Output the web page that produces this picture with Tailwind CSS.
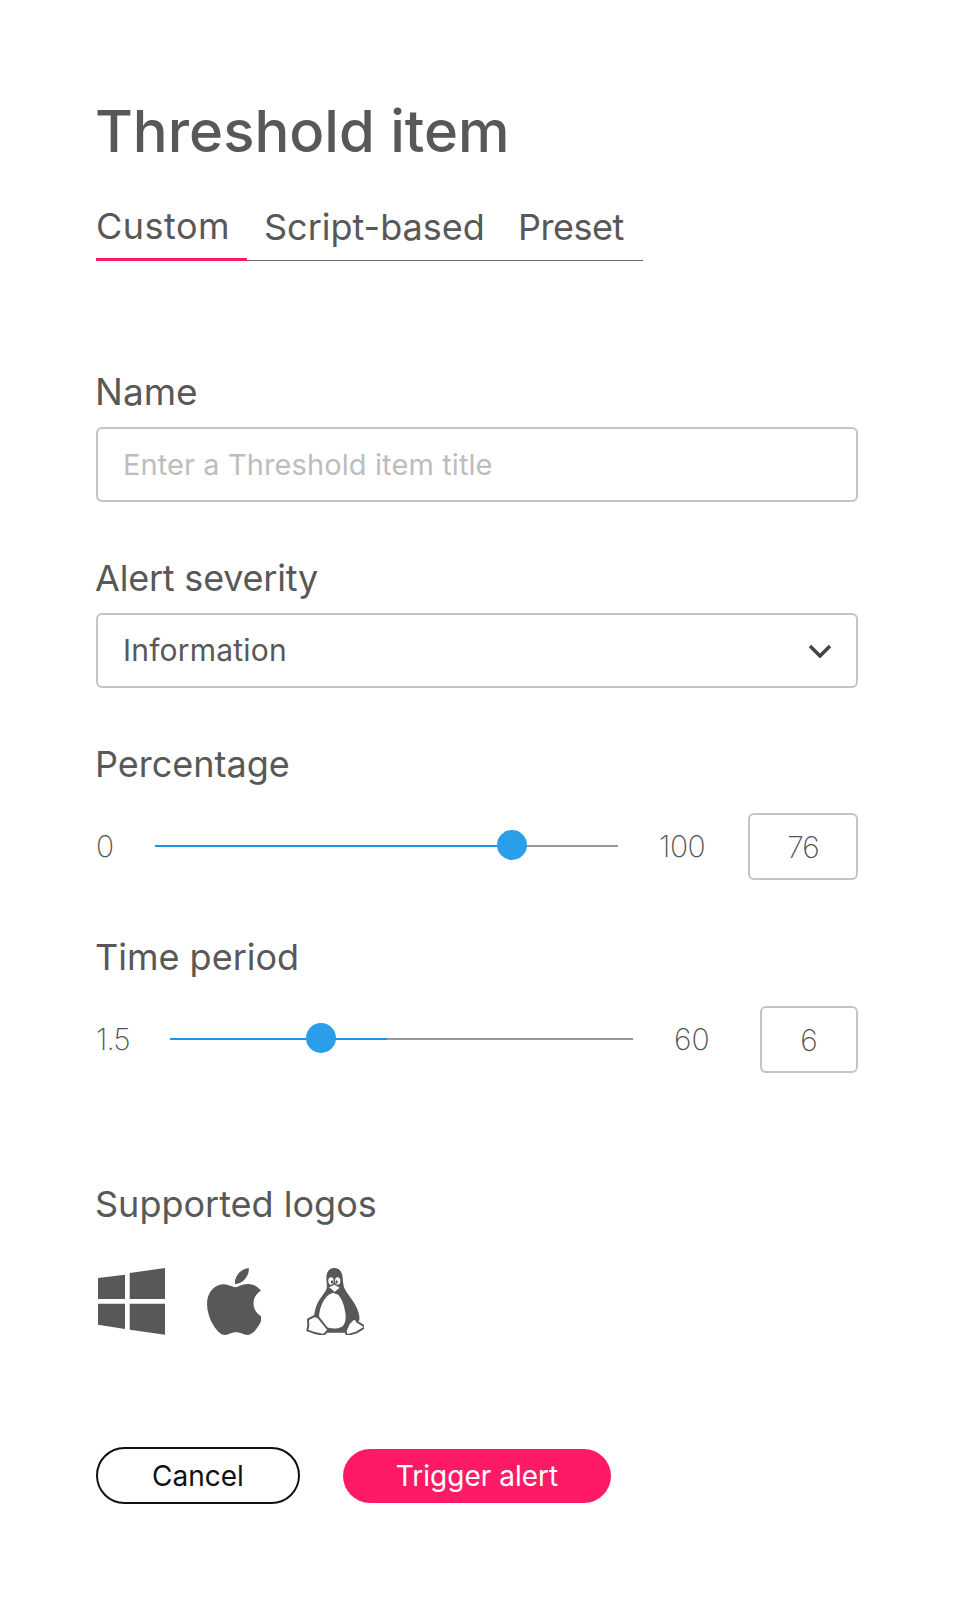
<!DOCTYPE html>
<html lang="en">
<head>
    <meta charset="UTF-8">
    <title>Threshold item</title>
    <script src="https://cdn.jsdelivr.net/npm/@tailwindcss/browser@4"></script>
</head>
<body class="bg-white font-['Inter',sans-serif] text-[#585858]">
    <main class="w-[954px] h-[1600px] pl-[96px] pr-[96px] pt-[96px]">
        <h1 class="-ml-px text-[58px] leading-[70px] font-medium">Threshold item</h1>

        <!-- Tabs -->
        <div class="flex w-[547px] mt-[35px] border-b border-[#666] h-[60px] text-[36px] leading-[44px]">
            <button class="w-[151px] h-[60px] pb-[8px] text-left tracking-[0.5px] border-b-[3px] border-[#ff1a66]">Custom</button>
            <button class="ml-[17px] w-[254px] pb-[8px] text-left">Script-based</button>
            <button class="pb-[8px] text-left tracking-[-0.5px]">Preset</button>
        </div>

        <!-- Name -->
        <label class="block -ml-px mt-[109px] text-[37px] leading-[44px]">Name</label>
        <input type="text" placeholder="Enter a Threshold item title" class="block w-[762px] h-[75px] mt-[13px] px-[25px] border-2 border-[#c4c4c4] rounded-md text-[29px] tracking-[0.1px] placeholder:text-[#bdbdbd]">

        <!-- Severity -->
        <label class="block -ml-px mt-[54px] text-[36px] leading-[44px] tracking-[-0.2px]">Alert severity</label>
        <div class="flex items-center justify-between w-[762px] h-[75px] mt-[13px] pl-[25px] pr-[24px] border-2 border-[#c4c4c4] rounded-md">
            <span class="text-[30px] tracking-[0.2px]">Information</span>
            <svg width="24" height="14" viewBox="0 0 24 14" fill="none" stroke="#444" stroke-width="3.5"><path d="M2 2l10 10L22 2"/></svg>
        </div>

        <!-- Percentage -->
        <label class="block -ml-px mt-[54px] text-[36px] leading-[44px]">Percentage</label>
        <div class="flex items-center h-[67px] mt-[27px] text-[30px] font-extralight text-[#555]">
            <span class="w-[59px]">0</span>
            <div class="relative w-[463px] h-[2px] -mt-[2px] bg-[#999]">
                <div class="w-[357px] h-[2px] bg-[#1a96e8]"></div>
                <div class="absolute left-[342px] top-[-15px] w-[30px] h-[30px] rounded-full bg-[#2a9ee9]"></div>
            </div>
            <span class="ml-[41px] w-[89px] tracking-[-0.5px]">100</span>
            <input value="76" class="w-[110px] h-[67px] border-2 border-[#c4c4c4] rounded-md text-center tracking-[-1px]">
        </div>

        <!-- Time period -->
        <label class="block -ml-px mt-[55px] text-[36px] leading-[44px]">Time period</label>
        <div class="flex items-center h-[67px] mt-[27px] text-[30px] font-extralight text-[#555]">
            <span class="w-[74px] tracking-[-1px]">1.5</span>
            <div class="relative w-[463px] h-[2px] -mt-[2px] bg-[#999]">
                <div class="w-[217px] h-[2px] bg-[#1a96e8]"></div>
                <div class="absolute left-[136px] top-[-15px] w-[30px] h-[30px] rounded-full bg-[#2a9ee9]"></div>
            </div>
            <span class="ml-[41px] w-[86px]">60</span>
            <input value="6" class="w-[98px] h-[67px] border-2 border-[#c4c4c4] rounded-md text-center">
        </div>

        <!-- Logos -->
        <label class="block -ml-px mt-[109px] text-[36px] leading-[44px]">Supported logos</label>
        <div class="flex items-start mt-[42px] h-[67px]">
            <svg class="ml-[2px]" width="67" height="67" viewBox="0 0 67 67" fill="#585858">
                <path d="M0 10L27 6.7V31H0zM31.7 5L67 0V31H31.7zM0 35.7H27V61L0 56.7zM31.7 35.7H67V66.7L31.7 61.7z"/>
            </svg>
            <svg class="ml-[42px]" width="54" height="67" viewBox="4 0 365 448" fill="#585858" preserveAspectRatio="none">
                <path d="M318.7 268.7c-.2-36.7 16.4-64.4 50-84.8-18.8-26.9-47.2-41.7-84.7-44.6-35.5-2.8-74.3 20.7-88.5 20.7-15 0-49.4-19.7-76.4-19.7C63.3 141.2 4 184.8 4 273.5q0 39.3 14.4 81.2c12.8 36.7 59 126.7 107.2 125.2 25.2-.6 43-17.9 75.8-17.9 31.8 0 48.3 17.9 76.4 17.9 48.6-.7 90.4-82.5 102.6-119.3-65.2-30.7-61.7-90-61.7-91.9zm-56.6-164.2c27.3-32.4 24.8-61.9 24-72.5-24.1 1.4-52 16.4-67.9 34.9-17.5 19.8-27.8 44.3-25.6 71.9 26.1 2 49.9-11.4 69.5-34.3z" transform="translate(0 -32)"/>
            </svg>
            <svg class="ml-[45px]" width="58" height="67" viewBox="18 18 174 201">
                <path d="M103 18C88 18 79 30 79 47c0 12 3 22 1 32-2 10-14 22-24 38-9 15-14 34-14 56l40 39h56l40-37c2-16-4-32-14-50-10-17-23-31-30-45-4-9-5-20-6-33-1-17-10-29-25-29z" fill="#585858"/>
                <path d="M101 92c-20 2-38 30-43 62-3 20 3 36 20 42 16 5 34 5 48-2 10-8 13-24 10-42-4-24-12-46-24-56-4 2-7-2-11-4z" fill="#fff"/>
                <ellipse cx="93" cy="57" rx="8" ry="11" fill="#fff"/>
                <ellipse cx="113" cy="57" rx="8" ry="11" fill="#fff"/>
                <ellipse cx="96" cy="60" rx="3.5" ry="5" fill="#585858"/>
                <ellipse cx="110" cy="60" rx="3.5" ry="5" fill="#585858"/>
                <path d="M85 75l18-8 18 10-17 14z" fill="#fff" stroke="#585858" stroke-width="3" stroke-linejoin="round"/>
                <path d="M24 172l20-10 11 4 30 38-14 15-30-7-19-7 3-15z" fill="#fff" stroke="#585858" stroke-width="6" stroke-linejoin="round"/>
                <path d="M165 166l5 12 26 17-26 16-30 9-3-14 10-22z" fill="#fff" stroke="#585858" stroke-width="6" stroke-linejoin="round"/>
            </svg>
        </div>

        <!-- Actions -->
        <div class="flex items-center mt-[112px]">
            <button class="w-[204px] h-[57px] rounded-full border-2 border-[#111] text-[28px] text-[#111]">Cancel</button>
            <button class="ml-[43px] w-[268px] h-[54px] rounded-full bg-[#ff1a66] text-[28px] text-white">Trigger alert</button>
        </div>
    </main>
</body>
</html>
